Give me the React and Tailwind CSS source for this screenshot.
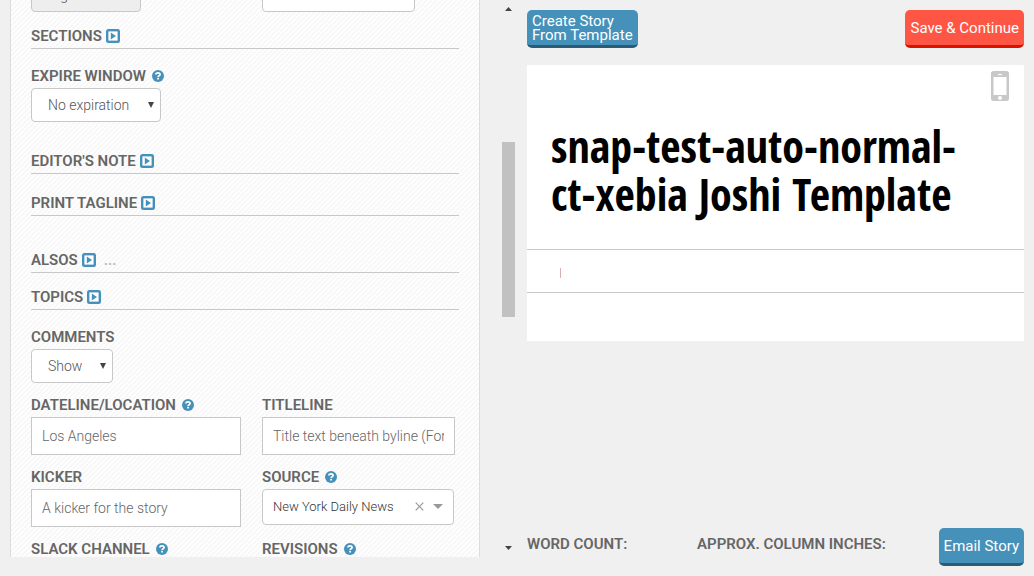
const ui = 'font-["Roboto","Liberation_Sans",sans-serif]';

function PlayIcon() {
  return (
    <svg viewBox="0 0 14 14" className="h-3.5 w-3.5 shrink-0" aria-hidden="true">
      <rect width="14" height="14" rx="2.5" fill="#4591ba" />
      <rect x="2.400" y="2.400" width="9.200" height="9.200" fill="#fff" />
      <path d="M4.800 3.400v7.200L10 7z" fill="#4591ba" />
    </svg>
  );
}

function HelpIcon() {
  return (
    <svg viewBox="0 0 12 12" className="ml-0.5 h-3 w-3 shrink-0" aria-hidden="true">
      <circle cx="6" cy="6" r="6" fill="#4591ba" />
      <path d="M3.900 4.600C3.900 3.200 4.900 2.800 6 2.800s2.100.6 2.100 1.700c0 1.200-2 1.200-2 2.500" fill="none" stroke="#fff" strokeWidth="1.7" />
      <rect x="5.200" y="7.800" width="1.800" height="1.700" fill="#fff" />
    </svg>
  );
}

const labelClass = "flex h-5 items-center gap-1 text-[15px] leading-5 font-semibold text-[#666]";

function Section({ title, className, children }) {
  return (
    <div className={"border-b border-[#c8c8c8] pb-0.5 " + className}>
      <button type="button" className={labelClass}>
        {title}
        <PlayIcon />
        {children}
      </button>
    </div>
  );
}

function Label({ htmlFor, help, children }) {
  return (
    <label htmlFor={htmlFor} className={labelClass + " mb-0.5"}>
      {children}
      {help && <HelpIcon />}
    </label>
  );
}

function Select({ id, width, value, label, disabled }) {
  return (
    <div className={"relative shrink-0 " + width}>
      <select
        id={id}
        aria-label={label}
        disabled={disabled}
        className="block h-[34px] w-full appearance-none rounded border border-[#c8c8c8] bg-white px-4 text-sm font-light text-[#555] disabled:bg-[#eee] disabled:opacity-100"
      >
        <option>{value}</option>
      </select>
      {!disabled && (
        <svg viewBox="0 0 6 6" className="pointer-events-none absolute top-[14px] right-[7px] h-1.5 w-1.5" aria-hidden="true">
          <path d="M0 0h6L3 6z" fill="#444" />
        </svg>
      )}
    </div>
  );
}

function TextField({ id, label, help, placeholder }) {
  return (
    <div>
      <Label htmlFor={id} help={help}>{label}</Label>
      <input
        id={id}
        type="text"
        placeholder={placeholder}
        className="block h-[38px] w-full border border-[#c8c8c8] bg-white px-2.5 text-sm font-light text-[#666] placeholder:text-[#666]"
      />
    </div>
  );
}

const buttonClass = "h-[38px] rounded-[5px] border-b-[3px] px-[5px] text-left text-[15px] leading-[14px] text-white";

export default function App() {
  return (
    <div className={"flex h-screen overflow-hidden bg-[#f0f0f0] pl-2.5 " + ui}>
      <form className="mb-[19px] w-[470px] shrink-0 overflow-hidden border-x border-[#ddd] bg-[linear-gradient(135deg,#f8f8f8_25%,#fff_25%,#fff_50%,#f8f8f8_50%,#f8f8f8_75%,#fff_75%)] bg-[length:5px_5px] px-5">
        <div className="flex h-3 items-end gap-[121px] overflow-hidden">
          <Select id="edition" label="Edition" width="w-[110px]" value="Digital" disabled />
          <input aria-label="Slug" className="h-[34px] w-[153px] rounded border border-[#c8c8c8] bg-white px-2.5 text-sm" />
        </div>

        <Section title="SECTIONS" className="mt-3.5" />
        <div className="mt-[17px]">
          <Label htmlFor="expire" help>EXPIRE WINDOW</Label>
          <Select id="expire" width="w-[130px]" value="No expiration" />
        </div>
        <Section title="EDITOR'S NOTE" className="mt-[29px]" />
        <Section title="PRINT TAGLINE" className="mt-[19px]" />
        <Section title="ALSOS" className="mt-[34px]">
          <span className="ml-1 text-[#bbb]">...</span>
        </Section>
        <Section title="TOPICS" className="mt-3.5" />
        <div className="mt-[17px]">
          <Label htmlFor="comments">COMMENTS</Label>
          <Select id="comments" width="w-[82px]" value="Show" />
        </div>

        <div className="mt-3 grid grid-cols-[210px_193px] gap-x-[21px] gap-y-3">
          <TextField id="dateline" label="DATELINE/LOCATION" help placeholder="Los Angeles" />
          <TextField id="titleline" label="TITLELINE" placeholder="Title text beneath byline (For columnists)" />
          <TextField id="kicker" label="KICKER" placeholder="A kicker for the story" />
          <div>
            <Label htmlFor="source" help>SOURCE</Label>
            <div className="relative w-[192px]">
              <select
                id="source"
                className="block h-9 w-full appearance-none rounded border border-[#c8c8c8] bg-white pr-12 pl-2.5 text-[13px] font-light text-[#333]"
              >
                <option>New York Daily News</option>
              </select>
              <button type="button" aria-label="Clear source" className="absolute top-[13px] right-[30px]">
                <svg viewBox="0 0 9 9" className="block h-[9px] w-[9px]">
                  <path d="M.7.7l7.600 7.600M8.300.7L.7 8.300" stroke="#999" strokeWidth="1.2" />
                </svg>
              </button>
              <svg viewBox="0 0 10 5" className="pointer-events-none absolute top-[15px] right-[11px] h-[5px] w-2.5" aria-hidden="true">
                <path d="M0 0h10L5 5z" fill="#999" />
              </svg>
            </div>
          </div>
          <TextField id="slack" label="SLACK CHANNEL" help placeholder="" />
          <TextField id="revisions" label="REVISIONS" help placeholder="" />
        </div>
      </form>

      <div aria-hidden="true" className="mt-[7px] mb-[26px] ml-[22px] flex w-[13px] shrink-0 flex-col items-center justify-between">
        <svg viewBox="0 0 7 4" className="h-1 w-[7px]">
          <path d="M0 4h7L3.500 0z" fill="#444" />
        </svg>
        <div className="mb-[98px] h-[175px] w-full bg-[#c1c1c1]" />
        <svg viewBox="0 0 7 4" className="h-1 w-[7px]">
          <path d="M0 0h7L3.500 4z" fill="#444" />
        </svg>
      </div>

      <main className="mr-2.5 ml-3 flex min-w-0 flex-1 flex-col py-2.5">
        <div className="flex justify-between">
          <button type="button" className={buttonClass + " border-[#2b5b75] bg-[#4591ba]"}>
            Create Story
            <br />
            From Template
          </button>
          <button type="button" className={buttonClass + " border-[#dd1100] bg-[#ff5544]"}>
            Save &amp; Continue
          </button>
        </div>

        <article className="mt-[17px] h-[276px] bg-white">
          <div className="flex h-[57px] justify-end pt-1.5 pr-[15px]">
            <svg viewBox="0 0 18 30" className="h-[30px] w-[18px]" role="img" aria-label="Mobile preview">
              <path fillRule="evenodd" fill="#c8c8c8" d="M2.500 0h13A2.500 2.500 0 0 1 18 2.500v25a2.500 2.500 0 0 1-2.500 2.500h-13A2.500 2.500 0 0 1 0 27.500v-25A2.500 2.500 0 0 1 2.500 0zM2.500 6v18h13V6zM7 3v1h4V3zM9 25a2 2 0 1 0 0 4a2 2 0 0 0 0-4z" />
            </svg>
          </div>
          <h1 className='h-[127px] px-6 font-["Open_Sans_Condensed","Noto_Sans_Condensed","Liberation_Sans_Narrow",sans-serif] text-[44px] leading-[48px] font-bold text-black'>
            snap-test-auto-normal-
            <br />
            ct-xebia Joshi Template
          </h1>
          <div className="flex h-11 items-center border-y border-[#c8c8c8] pt-[3px] pl-[33px]">
            <span className="h-2.5 w-px bg-[#dbb0b0]" />
          </div>
        </article>

        <footer className="mt-auto flex items-start text-[15px] leading-8 font-semibold text-[#666]">
          <span className="w-[170px]">WORD COUNT:</span>
          <span>APPROX. COLUMN INCHES:</span>
          <button type="button" className={buttonClass + " ml-auto border-[#2b5b75] bg-[#4591ba] font-normal"}>
            Email Story
          </button>
        </footer>
      </main>
    </div>
  );
}
